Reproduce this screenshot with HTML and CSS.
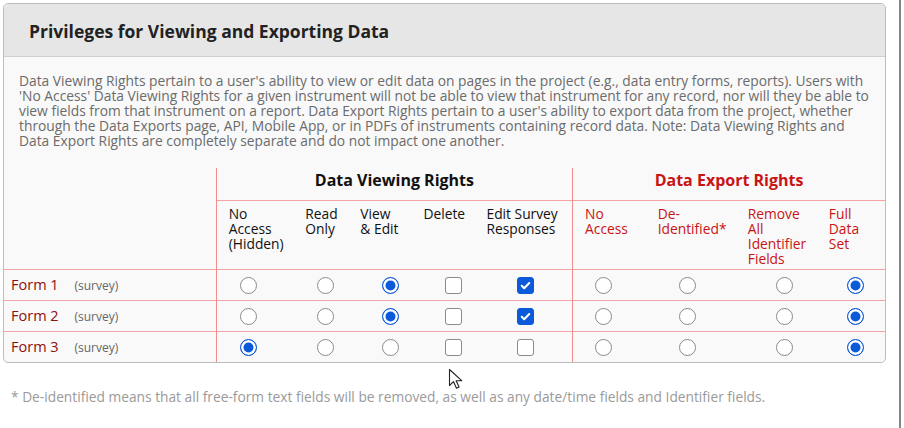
FILE: index.html
```html
<!DOCTYPE html>
<html lang="en">
<head>
    <meta charset="UTF-8">
    <meta name="viewport" content="width=device-width, initial-scale=1.0">
    <title>User Rights</title>
    <link rel="stylesheet" href="styles.css">
</head>
<body>
    <div class="page">
        <div class="panel">
            <div class="panel-head">Privileges for Viewing and Exporting Data</div>
            <div class="panel-body">
                <p class="intro">Data Viewing Rights pertain to a user's ability to view or edit data on pages in the project (e.g., data entry forms, reports). Users with 'No Access' Data Viewing Rights for a given instrument will not be able to view that instrument for any record, nor will they be able to view fields from that instrument on a report. Data Export Rights pertain to a user's ability to export data from the project, whether through the Data Exports page, API, Mobile App, or in PDFs of instruments containing record data. Note: Data Viewing Rights and Data Export Rights are completely separate and do not impact one another.</p>

                <table class="rights">
                    <colgroup>
                        <col style="width:212px">
                        <col style="width:83px">
                        <col style="width:55px">
                        <col style="width:63px">
                        <col style="width:63px">
                        <col style="width:92px">
                        <col style="width:79px">
                        <col style="width:90px">
                        <col style="width:81px">
                        <col style="width:62px">
                    </colgroup>
                    <tr class="group-row">
                        <th rowspan="2"></th>
                        <th colspan="5" class="group split">Data Viewing Rights</th>
                        <th colspan="4" class="group export split">Data Export Rights</th>
                    </tr>
                    <tr class="label-row">
                        <th class="split first">No<br>Access<br>(Hidden)</th>
                        <th>Read<br>Only</th>
                        <th>View<br>&amp; Edit</th>
                        <th>Delete</th>
                        <th>Edit Survey<br>Responses</th>
                        <th class="export split first">No<br>Access</th>
                        <th class="export">De-<br>Identified*</th>
                        <th class="export">Remove<br>All<br>Identifier<br>Fields</th>
                        <th class="export">Full<br>Data<br>Set</th>
                    </tr>
                    <tr class="form-row">
                        <td class="form-name">Form 1 <span class="tag">(survey)</span></td>
                        <td class="split"><input type="radio" name="view1"></td>
                        <td><input type="radio" name="view1"></td>
                        <td><input type="radio" name="view1" checked></td>
                        <td><span class="box"></span></td>
                        <td><span class="box on"><svg viewBox="0 0 16 16"><path d="M4 8.3l2.6 2.6L12 5.3"/></svg></span></td>
                        <td class="split"><input type="radio" name="exp1"></td>
                        <td><input type="radio" name="exp1"></td>
                        <td><input type="radio" name="exp1"></td>
                        <td><input type="radio" name="exp1" checked></td>
                    </tr>
                    <tr class="form-row">
                        <td class="form-name">Form 2 <span class="tag">(survey)</span></td>
                        <td class="split"><input type="radio" name="view2"></td>
                        <td><input type="radio" name="view2"></td>
                        <td><input type="radio" name="view2" checked></td>
                        <td><span class="box"></span></td>
                        <td><span class="box on"><svg viewBox="0 0 16 16"><path d="M4 8.3l2.6 2.6L12 5.3"/></svg></span></td>
                        <td class="split"><input type="radio" name="exp2"></td>
                        <td><input type="radio" name="exp2"></td>
                        <td><input type="radio" name="exp2"></td>
                        <td><input type="radio" name="exp2" checked></td>
                    </tr>
                    <tr class="form-row">
                        <td class="form-name">Form 3 <span class="tag">(survey)</span></td>
                        <td class="split"><input type="radio" name="view3" checked></td>
                        <td><input type="radio" name="view3"></td>
                        <td><input type="radio" name="view3"></td>
                        <td><span class="box"></span></td>
                        <td><span class="box"></span></td>
                        <td class="split"><input type="radio" name="exp3"></td>
                        <td><input type="radio" name="exp3"></td>
                        <td><input type="radio" name="exp3"></td>
                        <td><input type="radio" name="exp3" checked></td>
                    </tr>
                </table>
            </div>
        </div>

        <p class="note">* De-identified means that all free-form text fields will be removed, as well as any date/time fields and Identifier fields.</p>

        <!-- mouse pointer -->
        <svg class="pointer" width="15" height="22" viewBox="0 0 15 22">
            <path d="M1.5 1.5v16l4-3.8 3 6.6 2.6-1.2-3-6.4h5.6z" fill="#fff" stroke="#222" stroke-width="1.1" stroke-linejoin="round"/>
        </svg>
    </div>
</body>
</html>
```

FILE: styles.css
```css
body {
    margin: 0;
    font-family: "Open Sans", Arial, sans-serif;
    background-color: #fff;
}
.page {
    position: relative;
    width: 901px;
    height: 428px;
    box-sizing: border-box;
    padding: 3px 0 0 3px;
    border-right: 2px solid #858585;
}
.panel {
    width: 883px;
    box-sizing: border-box;
    border: 1px solid #bdbdbd;
    border-radius: 5px;
    background: #f9f9f9;
    overflow: hidden;
}
.panel-head {
    height: 53px;
    box-sizing: border-box;
    padding: 15px 25px 0;
    background: #e6e6e6;
    border-bottom: 1px solid #cfcfcf;
    font-size: 17.5px;
    font-weight: 700;
    color: #222;
}
.intro {
    margin: 16px 15px 0;
    font-size: 13.8px;
    line-height: 15px;
    color: #6b6b6b;
}
.rights {
    width: 100%;
    margin-top: 20px;
    border-collapse: collapse;
    table-layout: fixed;
    font-size: 13.8px;
    line-height: 15px;
}
.rights th {
    font-weight: 400;
    text-align: left;
    vertical-align: top;
    padding: 0 0 0 6px;
    color: #111;
}
.rights .split {
    border-left: 1px solid #f08c8c;
}
.group-row th.group {
    height: 27px;
    padding: 5px 0 0;
    text-align: center;
    font-size: 16px;
    font-weight: 700;
    vertical-align: top;
}
.group-row th.export {
    color: #a30e0e;
}
.label-row th {
    height: 63px;
    padding-top: 5px;
}
.label-row th.first {
    padding-left: 12px;
}
.rights th.export {
    color: #c81414;
}
.label-row,
.form-row + .form-row {
    border-top: 1px solid #f3a3a3;
}
.label-row {
    border-bottom: 1px solid #f3a3a3;
}
.form-row td {
    height: 30px;
    padding: 0;
    vertical-align: middle;
}
.form-name {
    padding-left: 7px !important;
    font-size: 14.5px;
    color: #8c1010;
}
.form-name .tag {
    margin-left: 12px;
    font-size: 12px;
    color: #666;
}

/* per-column offsets so the controls sit under their labels */
.form-row td:nth-child(2) { padding-left: 23px; }
.form-row td:nth-child(3) { padding-left: 18px; }
.form-row td:nth-child(4) { padding-left: 28px; }
.form-row td:nth-child(5) { padding-left: 28px; }
.form-row td:nth-child(6) { padding-left: 37px; }
.form-row td:nth-child(7) { padding-left: 22px; }
.form-row td:nth-child(8) { padding-left: 27px; }
.form-row td:nth-child(9) { padding-left: 34px; }
.form-row td:nth-child(10) { padding-left: 24px; }

input[type="radio"] {
    appearance: none;
    display: block;
    width: 17px;
    height: 17px;
    margin: 0;
    border: 1px solid #8a8a8a;
    border-radius: 50%;
    background: #fff;
}
input[type="radio"]:checked {
    border: 1.5px solid #1059d6;
    background: #0b5ad9;
    box-shadow: inset 0 0 0 2.5px #fff;
}
.box {
    display: block;
    width: 17px;
    height: 17px;
    box-sizing: border-box;
    border: 1px solid #8a8a8a;
    border-radius: 3px;
    background: #fff;
}
.box.on {
    border-color: #0b5ad9;
    background: #0b5ad9;
}
.box svg {
    display: block;
    width: 15px;
    height: 15px;
    fill: none;
    stroke: #fff;
    stroke-width: 2.2;
    stroke-linecap: round;
    stroke-linejoin: round;
}
.note {
    margin: 24px 0 0 8px;
    font-size: 13.75px;
    color: #9a9a9a;
}
.pointer {
    position: absolute;
    left: 448px;
    top: 368px;
}
```
